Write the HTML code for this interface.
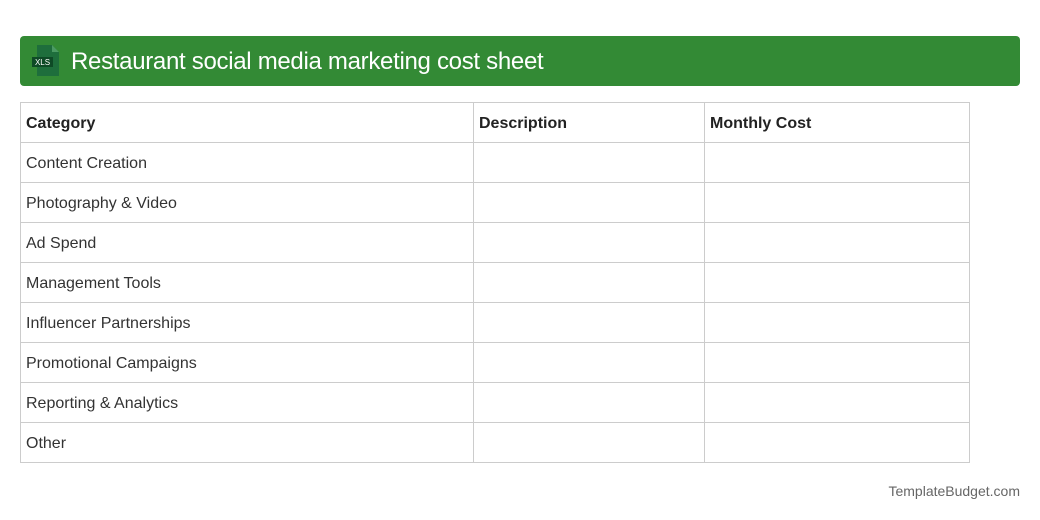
<!DOCTYPE html>
<html><head><meta charset="utf-8"><style>
*{margin:0;padding:0;box-sizing:border-box}
body{width:1040px;height:520px;background:#fff;font-family:"Liberation Sans",sans-serif;position:relative;overflow:hidden}
.hdr{position:absolute;left:20px;top:36px;width:1000px;height:50px;background:#338a35;border-radius:4px}
.hdr h1{position:absolute;left:51px;top:12px;font-size:24px;font-weight:normal;color:#fff;letter-spacing:-0.3px}
.ic{position:absolute;left:12px;top:9px}
table{position:absolute;left:20px;top:102px;border-collapse:collapse;font-size:16px;color:#333}
td{border:1px solid #ccc;height:40px;padding:2px 5px 0;vertical-align:middle}
tr:first-child td{font-weight:bold;color:#222}
.ft{position:absolute;right:20px;top:483px;font-size:14px;color:#666}
</style></head><body>
<div class="hdr">
<svg class="ic" width="28" height="32" viewBox="0 0 28 32"><path d="M5 0h15l7 7v24H5z" fill="#1e6e3c"/><path d="M20 0v7h7z" fill="#4b9a63"/><rect x="0" y="12" width="21" height="10" fill="#0e4a26"/><text x="10.5" y="20" font-size="8" fill="#fff" text-anchor="middle" font-family="Liberation Sans">XLS</text></svg>
<h1>Restaurant social media marketing cost sheet</h1>
</div>
<table>
<tr><td style="width:453px">Category</td><td style="width:231px">Description</td><td style="width:265px">Monthly Cost</td></tr>
<tr><td>Content Creation</td><td></td><td></td></tr>
<tr><td>Photography &amp; Video</td><td></td><td></td></tr>
<tr><td>Ad Spend</td><td></td><td></td></tr>
<tr><td>Management Tools</td><td></td><td></td></tr>
<tr><td>Influencer Partnerships</td><td></td><td></td></tr>
<tr><td>Promotional Campaigns</td><td></td><td></td></tr>
<tr><td>Reporting &amp; Analytics</td><td></td><td></td></tr>
<tr><td>Other</td><td></td><td></td></tr>
</table>
<div class="ft">TemplateBudget.com</div>
</body></html>
